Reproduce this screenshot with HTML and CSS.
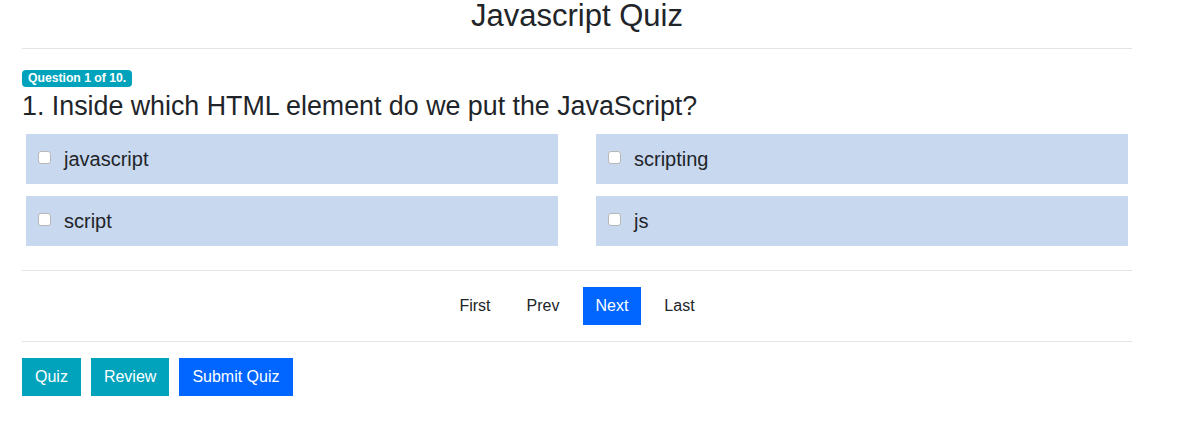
FILE: index.html
```html
<!DOCTYPE html>
<html>
<head>
<meta charset="utf-8">
<link rel="stylesheet" href="styles.css">
</head>
<body>
<div class="container">
  <h1 class="title">Javascript Quiz</h1>
  <hr class="rule">
  <div class="question">
    <span class="badge">Question 1 of 10.</span>
    <h2 class="qtext">1. Inside which HTML element do we put the JavaScript?</h2>
    <div class="options">
      <label class="option"><input type="checkbox" class="check"><span>javascript</span></label>
      <label class="option"><input type="checkbox" class="check"><span>scripting</span></label>
      <label class="option"><input type="checkbox" class="check"><span>script</span></label>
      <label class="option"><input type="checkbox" class="check"><span>js</span></label>
    </div>
  </div>
  <hr class="rule rule-mid">
  <div class="pager">
    <a class="page">First</a>
    <a class="page">Prev</a>
    <a class="page active">Next</a>
    <a class="page">Last</a>
  </div>
  <hr class="rule rule-low">
  <div class="actions">
    <button class="btn btn-info">Quiz</button>
    <button class="btn btn-info">Review</button>
    <button class="btn btn-primary">Submit Quiz</button>
  </div>
</div>
</body>
</html>
```
FILE: styles.css
```css
body {
  margin: 0;
  font-family: "Liberation Sans", Arial, sans-serif;
  color: #212529;
  background: #fff;
}
.container {
  width: 1110px;
  margin-left: 22px;
}
.title {
  margin: 0;
  padding-top: 1px;
  height: 47px;
  font-size: 31px;
  line-height: 30px;
  font-weight: 400;
  text-align: center;
}
.rule {
  margin: 0;
  border: 0;
  border-top: 1px solid #e4e4e4;
  height: 0;
}
.question {
  padding-top: 21px;
}
.badge {
  display: block;
  width: fit-content;
  background: #00a3bb;
  color: #fff;
  font-size: 12.2px;
  font-weight: 700;
  line-height: 17px;
  height: 17px;
  padding: 0 6px;
  border-radius: 4px;
}
.qtext {
  margin: 3px 0 0 0;
  font-size: 26.8px;
  font-weight: 400;
  line-height: 32px;
  height: 44px;
}
.options {
  display: grid;
  grid-template-columns: 532px 532px;
  column-gap: 38px;
  row-gap: 12px;
  padding: 0 4px;
}
.option {
  display: flex;
  align-items: center;
  height: 50px;
  background: #c8d8ef;
  padding-left: 12px;
  font-size: 20px;
}
.check {
  appearance: none;
  -webkit-appearance: none;
  width: 13px;
  height: 13px;
  margin: -4px 13px 0 0;
  background: #fff;
  border: 1px solid #b8b8b8;
  border-radius: 3px;
  box-sizing: border-box;
}
.rule-mid {
  margin-top: 24px;
}
.pager {
  display: flex;
  justify-content: center;
  gap: 11px;
  padding: 16px 0;
}
.page {
  display: flex;
  align-items: center;
  height: 38px;
  padding: 0 12.5px;
  font-size: 16px;
  color: #212529;
}
.page.active {
  background: #0066ff;
  color: #fff;
}
.actions {
  display: flex;
  gap: 10px;
  padding-top: 16px;
}
.btn {
  height: 38px;
  border: 0;
  padding: 0 13px;
  font-family: "Liberation Sans", Arial, sans-serif;
  font-size: 16px;
  color: #fff;
  border-radius: 0;
}
.btn-info {
  background: #00a3bb;
}
.btn-primary {
  background: #0066ff;
}
```
